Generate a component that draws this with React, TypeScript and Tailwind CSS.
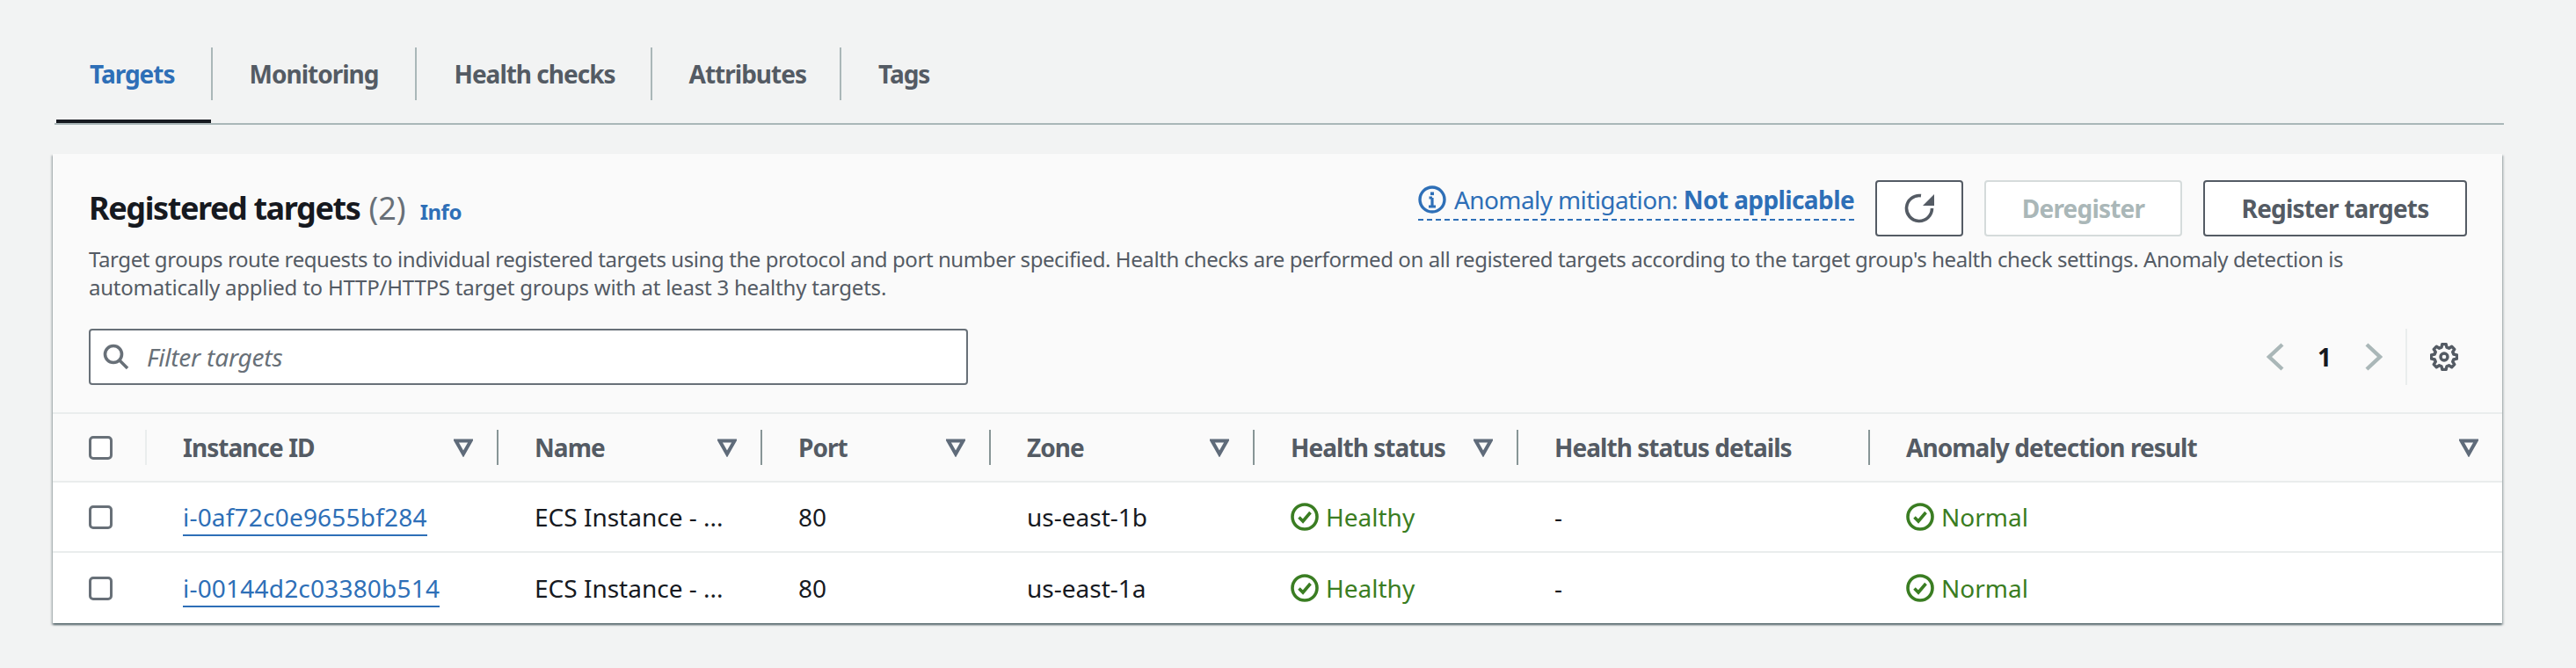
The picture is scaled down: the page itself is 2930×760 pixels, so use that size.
import React from "react";

const font = { fontFamily: '"Noto Sans", "Open Sans", sans-serif' };

function SortIcon() {
  return (
    <svg width="22" height="22" viewBox="0 0 22 22" fill="none" className="shrink-0">
      <path d="M2.5 3.5 H19.5 L11 18.5 Z" stroke="#5f6b7a" strokeWidth="4" strokeLinejoin="miter" />
    </svg>
  );
}

function CheckBox() {
  return <span className="block h-[27px] w-[27px] rounded-[5px] border-[3px] border-[#687078] bg-white" />;
}

function StatusOk({ label }: { label: string }) {
  return (
    <span className="flex items-center gap-[8px] text-[#3a7d22]">
      <svg width="32" height="32" viewBox="0 0 32 32" fill="none">
        <circle cx="16" cy="16" r="14" stroke="#3a7d22" strokeWidth="3.6" />
        <path d="M9.5 16.5 L14 21 L22.5 11" stroke="#3a7d22" strokeWidth="3.6" />
      </svg>
      {label}
    </span>
  );
}

function GearIcon() {
  let d = "";
  for (let t = 0; t < 8; t++) {
    const a = (t * Math.PI) / 4;
    const pts: [number, number][] = [
      [11.2, a - 0.27],
      [14.6, a - 0.15],
      [14.6, a + 0.15],
      [11.2, a + 0.27],
    ];
    pts.forEach(([r, b], n) => {
      const x = 16 + r * Math.sin(b);
      const y = 16 - r * Math.cos(b);
      d += `${t === 0 && n === 0 ? "M" : "L"}${x.toFixed(2)} ${y.toFixed(2)} `;
    });
  }
  return (
    <svg width="32" height="32" viewBox="0 0 32 32" fill="none">
      <path d={d + "Z"} stroke="#545b64" strokeWidth="3.4" strokeLinejoin="round" />
      <circle cx="16" cy="16" r="4" stroke="#545b64" strokeWidth="3.4" />
    </svg>
  );
}

const tabs = [
  { label: "Targets", pad: "pl-[40px] pr-[41px] text-[#2e6fb7]" },
  { label: "Monitoring", pad: "px-[42px] text-[#545b64]" },
  { label: "Health checks", pad: "pl-[42px] pr-[40px] text-[#545b64]" },
  { label: "Attributes", pad: "pl-[42px] pr-[38px] text-[#545b64]" },
  { label: "Tags", pad: "px-[42px] text-[#545b64]" },
];

const columns = [
  { label: "Instance ID", sort: true, width: "w-[400px]" },
  { label: "Name", sort: true, width: "w-[300px]" },
  { label: "Port", sort: true, width: "w-[260px]" },
  { label: "Zone", sort: true, width: "w-[300px]" },
  { label: "Health status", sort: true, width: "w-[300px]" },
  { label: "Health status details", sort: false, width: "w-[400px]" },
  { label: "Anomaly detection result", sort: true, width: "flex-1" },
];

const rows = [
  { id: "i-0af72c0e9655bf284", zone: "us-east-1b" },
  { id: "i-00144d2c03380b514", zone: "us-east-1a" },
];

export default function App() {
  return (
    <div style={font} className="h-[760px] w-[2930px] overflow-hidden bg-[#f2f3f3] pl-[62px] pr-[82px] pt-[54px] text-[28px] text-[#16191f]">
      <div className="flex h-[88px] border-b-[2px] border-[#aab7b8]">
        {tabs.map((tab, i) => (
          <div key={tab.label} className={i === 0 ? "relative" : ""}>
            <div className={`flex h-[60px] items-center font-bold tracking-[-1px] ${tab.pad} ${i < tabs.length - 1 ? "border-r-[2px] border-[#aab7b8]" : ""}`}>
              {tab.label}
            </div>
            {i === 0 && <div className="absolute bottom-0 left-[2px] h-[4px] w-[176px] bg-[#16191f]" />}
          </div>
        ))}
      </div>

      <div className="-ml-[2px] mr-[2px] mt-[33px] bg-[#fafafa] shadow-[0_2px_2px_0_rgba(0,28,36,0.5),2px_2px_2px_0_rgba(0,28,36,0.15),-2px_2px_2px_0_rgba(0,28,36,0.15)]">
        <div className="h-[296px] border-b-[2px] border-[#eaeded] pl-[41px] pr-[40px]">
          <div className="flex items-start justify-between pt-[30px]">
            <div className="flex items-baseline pt-[8px]">
              <span className="text-[36px] font-bold leading-[48px] tracking-[-1.4px]">Registered targets</span>
              <span className="ml-[10px] text-[36px] leading-[48px] text-[#687078]">(2)</span>
              <span className="ml-[16px] text-[24px] font-bold tracking-[-0.5px] text-[#2e6fb7]">Info</span>
            </div>
            <div className="flex items-start">
              <div className="mt-[6px] flex h-[40px] items-center gap-[9px] border-b-[2px] border-dashed border-[#2e6fb7] pb-[6px] text-[28px] tracking-[-0.6px] text-[#2e6fb7]">
                <svg width="32" height="32" viewBox="0 0 32 32" fill="none">
                  <circle cx="16" cy="16" r="14" stroke="#2e6fb7" strokeWidth="3.4" />
                  <path d="M16 14 V24 M12 24 H20 M12.5 14 H16" stroke="#2e6fb7" strokeWidth="3.2" />
                  <rect x="14" y="7.5" width="4" height="3.6" fill="#2e6fb7" />
                </svg>
                <span>Anomaly mitigation: <span className="font-bold">Not applicable</span></span>
              </div>
              <button className="ml-[24px] flex h-[64px] w-[100px] items-center justify-center rounded-[4px] border-[2px] border-[#545b64] bg-white">
                <svg width="35" height="34" viewBox="0 0 35 34" fill="none">
                  <path d="M19 2.6 A14.5 14.5 0 1 0 31.5 17" stroke="#545b64" strokeWidth="3.6" />
                  <path d="M34 1 V14 H21 Z" fill="#545b64" />
                </svg>
              </button>
              <button className="ml-[24px] h-[64px] w-[225px] rounded-[4px] border-[2px] border-[#d5dbdb] bg-white font-bold tracking-[-0.8px] text-[#aab7b8]">Deregister</button>
              <button className="ml-[24px] h-[64px] w-[300px] rounded-[4px] border-[2px] border-[#545b64] bg-white font-bold tracking-[-0.8px] text-[#545b64]">Register targets</button>
            </div>
          </div>
          <p className="mt-[10px] text-[24px] leading-[32px] text-[#545b64]">
            <span className="block whitespace-nowrap tracking-[-0.42px]">Target groups route requests to individual registered targets using the protocol and port number specified. Health checks are performed on all registered targets according to the target group's health check settings. Anomaly detection is</span>
            <span className="block whitespace-nowrap tracking-[-0.22px]">automatically applied to HTTP/HTTPS target groups with at least 3 healthy targets.</span>
          </p>
          <div className="mt-[31px] flex items-center justify-between">
            <div className="flex h-[64px] w-[1000px] items-center gap-[20px] rounded-[4px] border-[2px] border-[#687078] bg-white pl-[14px]">
              <svg width="30" height="30" viewBox="0 0 30 30" fill="none">
                <circle cx="12" cy="12" r="9.5" stroke="#687078" strokeWidth="3.6" />
                <path d="M19 19 L28 28" stroke="#687078" strokeWidth="3.6" />
              </svg>
              <span className="italic tracking-[-0.2px] text-[#687078]">Filter targets</span>
            </div>
            <div className="flex h-[64px] items-center">
              <svg width="20" height="32" viewBox="0 0 20 32" fill="none" className="mr-[38px]">
                <path d="M18 2 L3 16 L18 30" stroke="#aab7b8" strokeWidth="4.4" />
              </svg>
              <span className="w-[14px] text-center font-bold">1</span>
              <svg width="20" height="32" viewBox="0 0 20 32" fill="none" className="ml-[40px] mr-[26px]">
                <path d="M2 2 L17 16 L2 30" stroke="#aab7b8" strokeWidth="4.4" />
              </svg>
              <div className="flex h-[64px] items-center border-l-[2px] border-[#eaeded] pl-[26px] pr-[10px]">
                <GearIcon />
              </div>
            </div>
          </div>
        </div>

        <div className="flex h-[78px] items-center border-b-[2px] border-[#eaeded] font-bold tracking-[-0.95px] text-[#545b64]">
          <div className="flex h-[40px] w-[107px] items-center border-r-[2px] border-[#eaeded] pl-[41px]">
            <CheckBox />
          </div>
          {columns.map((col, i) => (
            <div key={col.label} className={`flex h-[40px] items-center justify-between pl-[41px] pr-[27px] ${col.width} ${i < columns.length - 1 ? "border-r-[2px] border-[#879596]" : ""}`}>
              <span>{col.label}</span>
              {col.sort && <SortIcon />}
            </div>
          ))}
        </div>

        {rows.map((row, i) => (
          <div key={row.id} className={`flex h-[80px] items-center bg-white ${i === 0 ? "border-b-[2px] border-[#eaeded]" : ""}`}>
            <div className="w-[107px] pl-[41px]">
              <CheckBox />
            </div>
            <div className="w-[400px] pl-[41px]">
              <a className="border-b-[2px] border-[#2e6fb7] pb-[1px] tracking-[0.2px] text-[#2e6fb7]">{row.id}</a>
            </div>
            <div className="w-[300px] pl-[41px]">ECS Instance - ...</div>
            <div className="w-[260px] pl-[41px]">80</div>
            <div className="w-[300px] pl-[41px]">{row.zone}</div>
            <div className="w-[300px] pl-[41px]">
              <StatusOk label="Healthy" />
            </div>
            <div className="w-[400px] pl-[41px]">-</div>
            <div className="flex-1 pl-[41px]">
              <StatusOk label="Normal" />
            </div>
          </div>
        ))}
      </div>
    </div>
  );
}
